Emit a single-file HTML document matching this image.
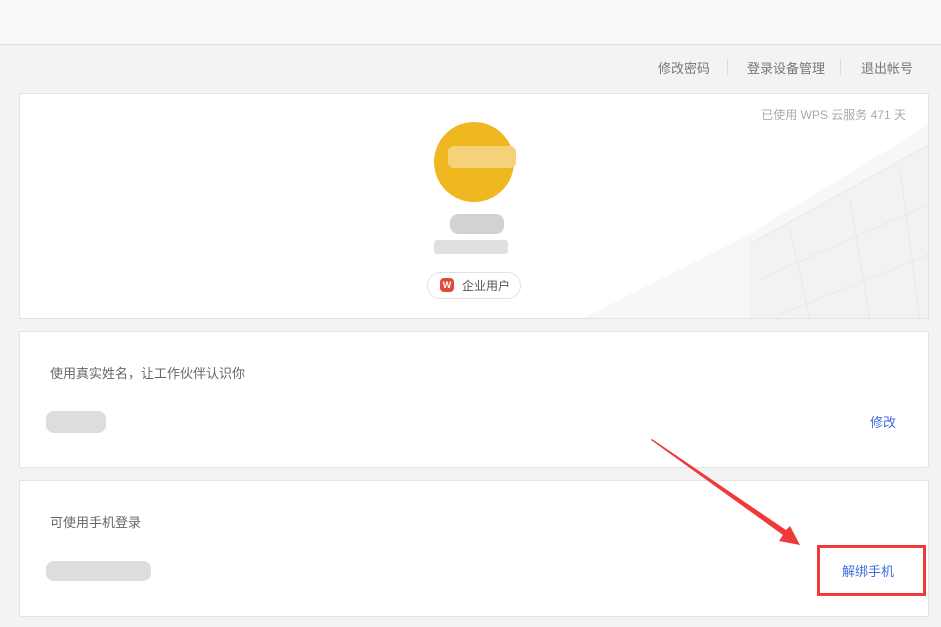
<!DOCTYPE html>
<html><head><meta charset="utf-8"><style>
*{margin:0;padding:0;box-sizing:border-box}
body{width:941px;height:627px;background:#f3f3f3;font-family:"Liberation Sans","Noto Sans CJK SC",sans-serif;position:relative;overflow:hidden;font-size:13px;color:#666}
.hdr{position:absolute;left:0;top:0;width:941px;height:45px;background:#f9f9f9;border-bottom:1px solid #dcdcdc}
.nav{position:absolute;top:58px;font-size:13px;color:#777}
.sep{position:absolute;top:59px;width:1px;height:16px;background:#ddd}
.card{position:absolute;left:19px;width:910px;background:#fff;border:1px solid #e3e3e3;border-radius:2px}
.blur{position:absolute;background:#ddd;border-radius:8px}
</style></head><body>
<div class="hdr"></div>
<div class="nav" style="left:658px">修改密码</div>
<div class="sep" style="left:727px"></div>
<div class="nav" style="left:747px">登录设备管理</div>
<div class="sep" style="left:840px"></div>
<div class="nav" style="left:861px">退出帐号</div>

<div class="card" style="top:93px;height:226px;overflow:hidden">
<svg width="910" height="226" style="position:absolute;left:0;top:0">
<polygon points="560,226 730,140 910,30 910,226" fill="#f7f7f7"/>
<polygon points="730,226 730,150 910,50 910,226" fill="#f2f2f2"/>
<g stroke="#e8e8e8" stroke-width="1" fill="none">
<line x1="730" y1="150" x2="910" y2="50"/><line x1="740" y1="185" x2="910" y2="110"/>
<line x1="760" y1="220" x2="910" y2="160"/><line x1="770" y1="135" x2="790" y2="226"/>
<line x1="830" y1="105" x2="850" y2="226"/><line x1="880" y1="75" x2="900" y2="226"/>
</g></svg>
<div style="position:absolute;right:22px;top:12px;color:#aaa;font-size:12px">已使用 WPS 云服务 471 天</div>
<div style="position:absolute;left:414px;top:28px;width:80px;height:80px;border-radius:50%;background:#f0b820"></div>
<div style="position:absolute;left:428px;top:52px;width:68px;height:22px;background:#f5d27a;border-radius:6px"></div>
<div class="blur" style="left:430px;top:120px;width:54px;height:20px;background:#d2d2d2"></div>
<div class="blur" style="left:414px;top:146px;width:74px;height:14px;background:#e0e0e0;border-radius:3px"></div>
<div style="position:absolute;left:407px;top:178px;width:94px;height:27px;border:1px solid #e2e2e2;border-radius:14px;font-size:12px;color:#555;padding:4px 0 0 34px">企业用户</div>
<div style="position:absolute;left:420px;top:184px;width:14px;height:14px;border-radius:4px;background:#e04a3a;color:#fff;font-size:9px;text-align:center;line-height:14px;font-weight:bold">W</div>
</div>

<div class="card" style="top:331px;height:137px">
<div style="position:absolute;left:30px;top:31px;color:#666;font-size:13px">使用真实姓名，让工作伙伴认识你</div>
<div class="blur" style="left:26px;top:79px;width:60px;height:22px"></div>
<div style="position:absolute;left:850px;top:80px;color:#3d6be0;font-size:13px">修改</div>
</div>

<div class="card" style="top:480px;height:137px">
<div style="position:absolute;left:30px;top:31px;color:#666;font-size:13px">可使用手机登录</div>
<div class="blur" style="left:26px;top:80px;width:105px;height:20px"></div>
<div style="position:absolute;left:822px;top:80px;color:#3d6be0;font-size:13px">解绑手机</div>
</div>

<div style="position:absolute;left:817px;top:545px;width:109px;height:51px;border:3px solid #f03a3a"></div>
<svg width="941" height="627" style="position:absolute;left:0;top:0">
<polygon points="651,440 652,439 786,530 790,526 800,545 779,541 783,535" fill="#f03a3a"/>
</svg>
</body></html>
